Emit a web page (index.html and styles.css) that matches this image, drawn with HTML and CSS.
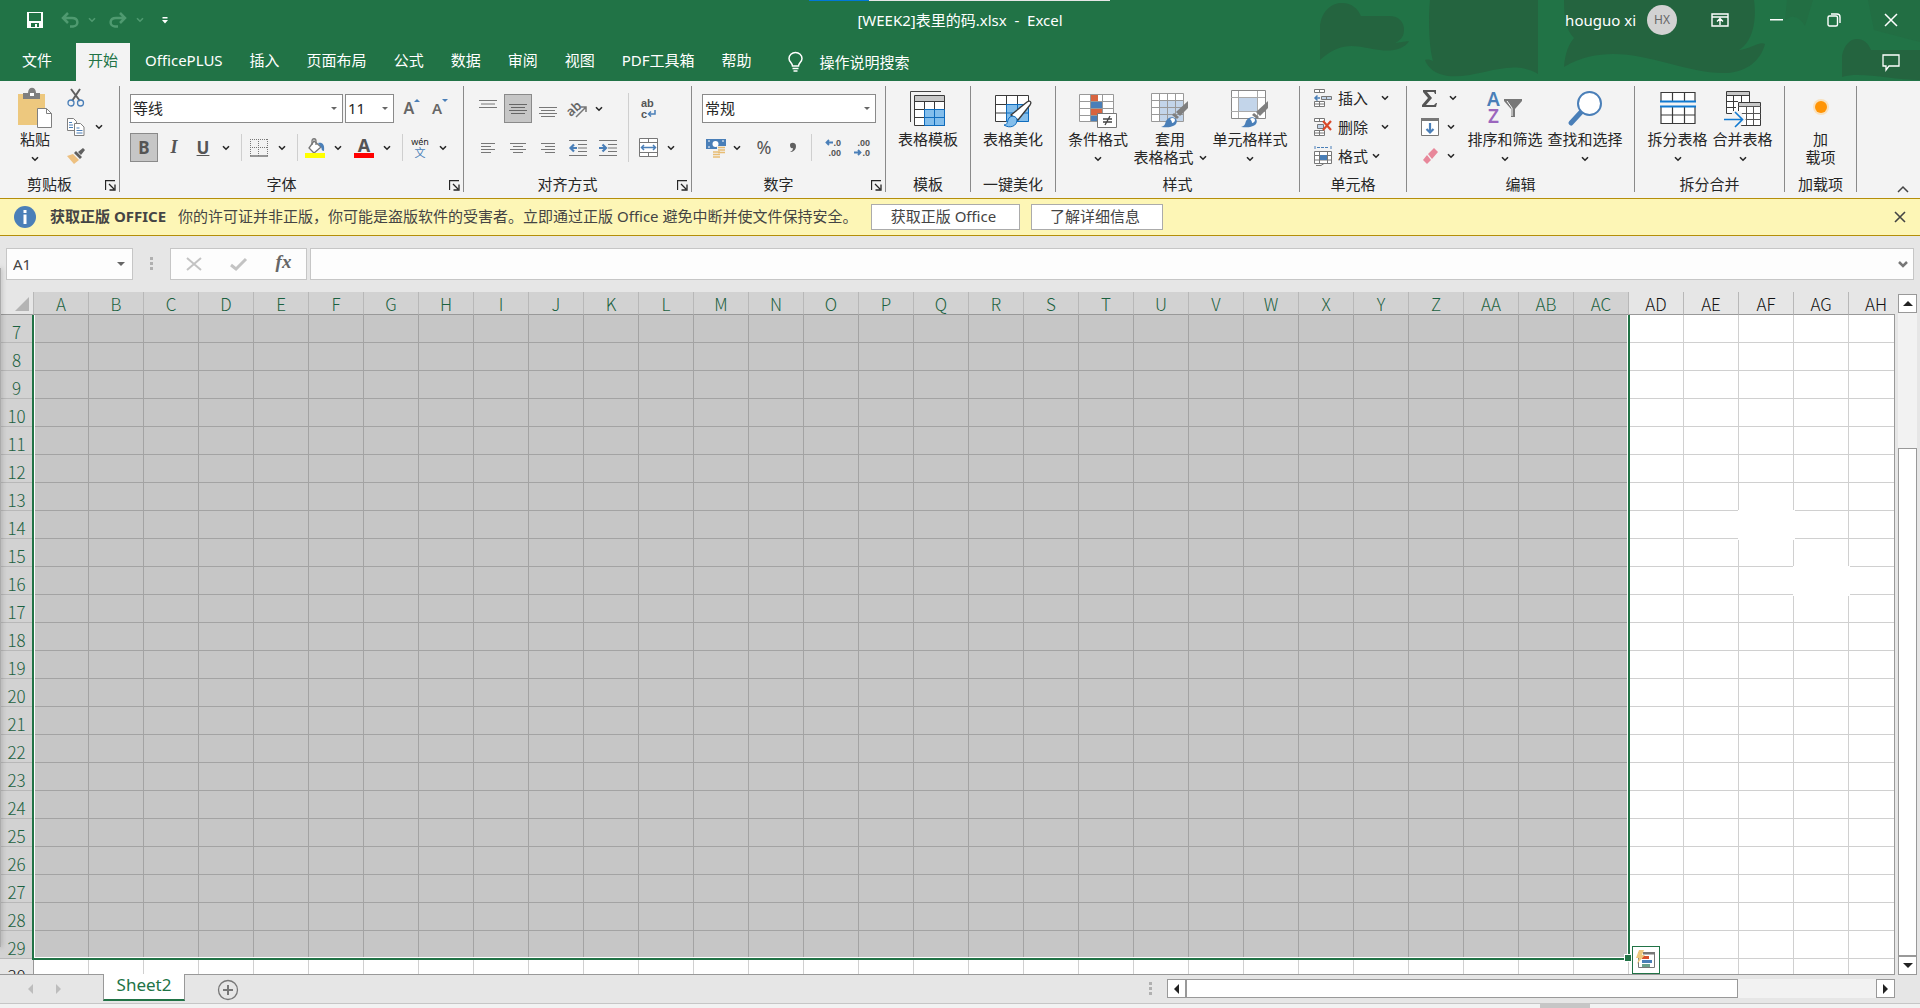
FILE: index.html
```html
<!DOCTYPE html>
<html lang="zh-CN">
<head>
  <meta charset="UTF-8">
  <meta name="viewport" content="width=device-width, initial-scale=1.0">
  <title>[WEEK2]表里的码.xlsx - Excel</title>
  <link rel="stylesheet" href="styles.css">
</head>
<body>
<!-- shared icons -->
<svg class="defs" width="0" height="0">
  <symbol id="chev" viewBox="0 0 8 6"><path d="M1 1.2l3 3 3-3" fill="none" stroke="currentColor" stroke-width="1.6"/></symbol>
  <symbol id="launch" viewBox="0 0 11 11"><path d="M.5 10V.5H10M4 4l5 5M10 4.500V10H4.500" fill="none" stroke="currentColor" stroke-width="1.300"/></symbol>
  <symbol id="brush" viewBox="0 0 28 28"><path d="M27 1v7l-8 8-4-4z" fill="#7f7f7f"/><path d="M13 13l5 4-2 2-5-4z" fill="#7f7f7f"/><path d="M0 27c4-1 4-3 5-6 2-4 7-5 10-2 2 3 0 6-3 7-4 2-8 1-12 1z" fill="#4a7fb8"/><path d="M9 19c2-2 5-1 5 1s-2 3-3 3c0-2-1-3-2-4z" fill="#fff"/></symbol>
</svg>

<header>
  <svg class="art" width="600" height="81" viewBox="1320 0 600 81" fill="#24643f">
    <path d="M1320 60V25C1322 10 1332 3 1342 3c10 0 16 6 19 13h28c10 0 15 6 15 14s-5 11-9 13l14-2c-4 8-18 11-29 9-20-2-36-12-60 10z"/>
    <path d="M1430 0h108v74c-28-17-58 5-90 2-13-2-20-8-23-16 4-1 5 0 8 1-4-15-5-42-3-61z"/>
    <path d="M1564 0h190c3 22-2 42-15 50 12-1 20-9 26-6-4 16-18 28-38 29-52 2-105-39-163-6 1-14 5-23 10-29-8-8-10-20-10-38z"/>
    <path d="M1842 77V56c2-11 8-17 15-17 7 0 11 4 14 11h49v30c-28 0-60-9-78-3z"/>
    <path d="M1787 0h26l-8 26c-6-10-14-12-20-5z" opacity=".35"/><path d="M1868 0h52v42l-46-12z" opacity=".35"/>
  </svg>
  <div class="load-strip"></div>
  <div class="titlebar">
    <div class="quick">
      <button aria-label="保存"><svg width="18" height="18" viewBox="0 0 18 18"><path d="M1 1h16v16H1z" fill="#fff"/><path d="M3 2h12v8H3zM5 12h8v4h-2v-3H9v3H5z" fill="#217346"/></svg></button>
      <button class="dim" aria-label="撤消"><svg width="18" height="16" viewBox="0 0 18 16" fill="none" stroke="currentColor" stroke-width="2.5"><path d="M7 1L2 6l5 5M2 6h9c7 0 7 8 1 8.500H9"/></svg></button>
      <button class="dim" aria-label="撤消列表"><svg class="chev"><use href="#chev"/></svg></button>
      <button class="dim" aria-label="恢复"><svg width="18" height="16" viewBox="0 0 18 16" fill="none" stroke="currentColor" stroke-width="2.5"><path d="M11 1l5 5-5 5M16 6H7c-7 0-7 8-1 8.500h3"/></svg></button>
      <button class="dim" aria-label="恢复列表"><svg class="chev"><use href="#chev"/></svg></button>
      <button aria-label="自定义快速访问工具栏"><svg width="6" height="7" viewBox="0 0 6 7" fill="#fff"><path d="M.5 0h5v1.500h-5zM0 3h6L3 6.500z"/></svg></button>
    </div>
    <h1>[WEEK2]表里的码.xlsx&nbsp; - &nbsp;Excel</h1>
    <div class="window">
      <span class="user">houguo xi</span>
      <span class="avatar">HX</span>
      <button aria-label="功能区显示选项"><svg width="18" height="14" viewBox="0 0 18 14" fill="none" stroke="#fff" stroke-width="1.400"><path d="M1 1h16v12H1zM1 4h16M9 12V6M6 8.500l3-3 3 3"/></svg></button>
      <button aria-label="最小化"><svg width="13" height="2"><path d="M0 0h13v1.500H0z" fill="#fff"/></svg></button>
      <button aria-label="还原"><svg width="14" height="14" viewBox="0 0 14 14" fill="none" stroke="#fff" stroke-width="1.400"><rect x="1" y="3" width="9.500" height="10" rx="1.500"/><path d="M4 1h6c2 0 3 1 3 3v6"/></svg></button>
      <button aria-label="关闭"><svg width="14" height="14" viewBox="0 0 14 14" stroke="#fff" stroke-width="1.500"><path d="M1 1l12 12M13 1L1 13"/></svg></button>
    </div>
  </div>
  <nav>
    <a href="#" class="file">文件</a>
    <a href="#" class="active">开始</a>
    <a href="#">OfficePLUS</a>
    <a href="#">插入</a>
    <a href="#">页面布局</a>
    <a href="#">公式</a>
    <a href="#">数据</a>
    <a href="#">审阅</a>
    <a href="#">视图</a>
    <a href="#">PDF工具箱</a>
    <a href="#">帮助</a>
    <a href="#" class="tell"><svg width="15" height="20" viewBox="0 0 15 20" fill="none" stroke="#fff" stroke-width="1.500"><path d="M4.500 14c0-3-3.500-4-3.500-7.500a6.500 6 0 0 1 13 0c0 3.500-3.500 4.500-3.500 7.500zM4.500 16.500h6M5.500 19h4"/></svg>操作说明搜索</a>
    <button class="comment" aria-label="批注"><svg width="18" height="17" viewBox="0 0 18 17" fill="none" stroke="#fff" stroke-width="1.300"><path d="M1 1h16v11H7l-3 4v-4H1z"/></svg></button>
  </nav>
</header>

<div class="ribbon">
  <section class="group g-clip">
    <div class="tools">
      <button class="big"><svg width="36" height="40" viewBox="0 0 36 40"><path d="M1 6h27v31H1z" fill="#edc87e"/><path d="M6 5h5c0-7 8-7 8 0h4v6H6z" fill="#7f7f7f"/><path d="M13 5h4v3h-4z" fill="#fff"/><path d="M20.500 20.500h9l5 5v14h-14z" fill="#fff" stroke="#7f7f7f"/><path d="M29.500 20.500v5h5" fill="none" stroke="#7f7f7f"/></svg><span>粘贴</span><svg class="chev"><use href="#chev"/></svg></button>
      <div class="stack">
        <button aria-label="剪切"><svg width="18" height="20" viewBox="0 0 18 20" fill="none"><path d="M4 1l9 12M13 1L5 13" stroke="#606060" stroke-width="2"/><circle cx="4" cy="15" r="3" stroke="#4a7fb8" stroke-width="1.300"/><circle cx="13.500" cy="15" r="3" stroke="#4a7fb8" stroke-width="1.300"/></svg></button>
        <div class="split"><button aria-label="复制"><svg width="18" height="18" viewBox="0 0 18 18" fill="#fff" stroke="#7f7f7f"><path d="M.5.5h6l3 3v9h-9z"/><path d="M7.500 5.500h6l3.500 3.500v8.500H7.500z"/><path d="M2 4.500h3M2 7h4M2 9.500h4M9.500 10h3M9.500 12.500h6M9.500 15h6" stroke="#4a7fb8"/></svg></button><button aria-label="复制选项"><svg class="chev"><use href="#chev"/></svg></button></div>
        <button aria-label="格式刷"><svg width="18" height="16" viewBox="0 0 18 16"><path d="M0 8l6-2 6 6-5 4z" fill="#edc080"/><path d="M7 5l2-2 6 6-2 2zM11 4l5-4 2 2-4 5z" fill="#606060"/></svg></button>
      </div>
    </div>
    <footer><span>剪贴板</span><button aria-label="剪贴板设置"><svg width="11" height="11"><use href="#launch"/></svg></button></footer>
  </section>

  <section class="group g-font">
    <div class="tools rows">
      <div class="row">
        <span class="drop wide"><select aria-label="字体"><option>等线</option></select></span>
        <span class="drop size"><select aria-label="字号"><option>11</option></select></span>
        <button class="icon grow" aria-label="增大字号"><span class="letter">A</span><svg width="6" height="3"><path d="M0 3l3-3 3 3z" fill="#4a7fb8"/></svg></button>
        <button class="icon" aria-label="减小字号"><span class="letter small">A</span><svg width="6" height="3"><path d="M0 0l3 3 3-3z" fill="#4a7fb8"/></svg></button>
      </div>
      <div class="row">
        <button class="icon on"><b>B</b></button>
        <button class="icon italic"><i>I</i></button>
        <div class="split"><button><u>U</u></button><button aria-label="下划线选项"><svg class="chev"><use href="#chev"/></svg></button></div>
        <i class="sep"></i>
        <div class="split"><button aria-label="边框"><svg width="18" height="18" viewBox="0 0 18 18" fill="none" stroke="#777"><path d="M0 .5h18M0 8.500h18M.5 0v17M8.500 0v17M17.500 0v17" stroke-dasharray="1 1"/><path d="M0 17h18" stroke-width="1.500"/></svg></button><button aria-label="边框选项"><svg class="chev"><use href="#chev"/></svg></button></div>
        <i class="sep"></i>
        <div class="split"><button aria-label="填充颜色"><svg width="20" height="20" viewBox="0 0 20 20"><path d="M9 3l7 6-7 6-5-5z" fill="#fff" stroke="#777" stroke-width="1.300"/><path d="M7 7V3c0-3 4-3 4 0v4" fill="none" stroke="#777" stroke-width="1.300"/><path d="M13 5c4-1 7 1 6 8-3 0-2-3-3-4z" fill="#4a7fb8"/><path d="M0 15h20v5H0z" fill="#ff0"/></svg></button><button aria-label="填充选项"><svg class="chev"><use href="#chev"/></svg></button></div>
        <div class="split next"><button aria-label="字体颜色" class="color"><b>A</b><span class="bar"></span></button><button aria-label="颜色选项"><svg class="chev"><use href="#chev"/></svg></button></div>
        <i class="sep"></i>
        <div class="split"><button class="wen"><small>wén</small><span>文</span></button><button aria-label="拼音选项"><svg class="chev"><use href="#chev"/></svg></button></div>
      </div>
    </div>
    <footer><span>字体</span><button aria-label="字体设置"><svg width="11" height="11"><use href="#launch"/></svg></button></footer>
  </section>

  <section class="group g-align">
    <div class="tools">
      <div class="rows">
        <div class="row gap">
          <button class="icon" aria-label="顶端对齐"><svg width="18" height="18" viewBox="0 0 18 18" stroke="#777"><path d="M0 .5h18M2 4h14M0 7.500h18"/></svg></button>
          <button class="icon on" aria-label="垂直居中"><svg width="18" height="12" viewBox="0 0 18 12" stroke="#666"><path d="M0 1.500h18M2 4.500h14M0 7.500h18M2 10.500h14"/></svg></button>
          <button class="icon" aria-label="底端对齐"><svg width="18" height="20" viewBox="0 0 18 20" stroke="#777"><path d="M0 8.500h18M2 11.500h14M0 14.500h18M2 17.500h14"/></svg></button>
          <div class="split tight"><button aria-label="方向"><svg width="20" height="18" viewBox="0 0 20 18"><text x="-2" y="13" transform="rotate(-42 6 9)" fill="#666" font-size="13" font-weight="600">ab</text><path d="M8 17L18 7M13 7h5v5" fill="none" stroke="#777" stroke-width="1.500"/></svg></button><button aria-label="方向选项"><svg class="chev"><use href="#chev"/></svg></button></div>
        </div>
        <div class="row gap">
          <button class="icon" aria-label="左对齐"><svg width="14" height="12" viewBox="0 0 14 12" stroke="#777"><path d="M0 1.500h14M0 4.500h10M0 7.500h14M0 10.500h10"/></svg></button>
          <button class="icon" aria-label="居中"><svg width="16" height="12" viewBox="0 0 16 12" stroke="#777"><path d="M0 1.500h16M3 4.500h10M0 7.500h16M3 10.500h10"/></svg></button>
          <button class="icon" aria-label="右对齐"><svg width="14" height="12" viewBox="0 0 14 12" stroke="#777"><path d="M0 1.500h14M4 4.500h10M0 7.500h14M4 10.500h10"/></svg></button>
          <button class="icon" aria-label="减少缩进"><svg width="18" height="16" viewBox="0 0 18 16" fill="none" stroke="#777"><path d="M0 .5h18M9 4.500h9M9 8h9M9 11.500h9M0 15.500h18"/><path d="M8 8H2M5 4.500L1.500 8 5 11.500" stroke="#4a7fb8" stroke-width="2.200"/></svg></button>
          <button class="icon" aria-label="增加缩进"><svg width="18" height="16" viewBox="0 0 18 16" fill="none" stroke="#777"><path d="M0 .5h18M9 4.500h9M9 8h9M9 11.500h9M0 15.500h18"/><path d="M0 8h6M3.500 4.500L7 8l-3.500 3.500" stroke="#4a7fb8" stroke-width="2.200"/></svg></button>
        </div>
      </div>
      <i class="sep tall"></i>
      <div class="rows">
        <div class="row"><button class="icon wrap" aria-label="自动换行"><span>ab</span><span>c<svg width="9" height="8" viewBox="0 0 9 8" fill="none" stroke="#4a7fb8" stroke-width="1.500"><path d="M8 0v4H2M4 1.500L1.500 4 4 6.500"/></svg></span></button></div>
        <div class="row"><div class="split"><button aria-label="合并后居中"><svg width="19" height="19" viewBox="0 0 19 19" fill="#fff" stroke="#777"><path d="M.5.5h18v18H.5zM.5 4.500h18M.5 14.500h18M9.500 0v4.500M9.500 14.500V19"/><path d="M2.500 9.500h14M5 7L2.500 9.500 5 12M14 7l2.500 2.500L14 12" fill="none" stroke="#4a7fb8" stroke-width="1.500"/></svg></button><button aria-label="合并选项"><svg class="chev"><use href="#chev"/></svg></button></div></div>
      </div>
    </div>
    <footer><span>对齐方式</span><button aria-label="对齐设置"><svg width="11" height="11"><use href="#launch"/></svg></button></footer>
  </section>

  <section class="group g-number">
    <div class="tools rows">
      <div class="row"><span class="drop number"><select aria-label="数字格式"><option>常规</option></select></span></div>
      <div class="row num">
        <div class="split tight"><button aria-label="会计数字格式"><svg width="20" height="20" viewBox="0 0 20 20"><path d="M0 1h20v10H0z" fill="#4a7fb8"/><circle cx="9.500" cy="6" r="3" fill="#fff"/><path d="M2 3h2M2 9h2M16 3h2" stroke="#fff"/><path d="M11 8h9v9h-5v3H7v-8h4z" fill="#f3f3f3"/><path d="M12 9.500h7M12 12h7M12 14.500h7M7 14h7M7 16.500h7M7 19h7" stroke="#e8bd74" stroke-width="1.600"/></svg></button><button aria-label="货币选项"><svg class="chev"><use href="#chev"/></svg></button></div>
        <button class="icon pct">%</button>
        <button class="icon" aria-label="千位分隔样式"><svg width="8" height="12" viewBox="0 0 8 12"><path d="M1 3c0-3 6-3 6 1S4 10 1 10c2-1 3-2 3-4-2 1-3-1-3-3z" fill="#606060"/></svg></button>
        <i class="sep"></i>
        <button class="icon dec"><span><svg width="8" height="7" viewBox="0 0 8 7" fill="none" stroke="#4a7fb8" stroke-width="1.800"><path d="M8 3.500H2M4 1L1.500 3.500 4 6"/></svg>.0</span><span>.00</span></button>
        <button class="icon dec"><span>.00</span><span><svg width="8" height="7" viewBox="0 0 8 7" fill="none" stroke="#4a7fb8" stroke-width="1.800"><path d="M0 3.500h6M4 1l2.500 2.500L4 6"/></svg>.0</span></button>
      </div>
    </div>
    <footer><span>数字</span><button aria-label="数字设置"><svg width="11" height="11"><use href="#launch"/></svg></button></footer>
  </section>

  <section class="group g-one">
    <div class="tools center">
      <button class="big"><svg width="38" height="40" viewBox="0 0 38 40" fill="none"><path d="M1.500 34V3.500H32" stroke="#444"/><path d="M5.500 7.500h30v30h-30z" fill="#fff"/><path d="M6 8h29v5H6z" fill="#c8c8c8"/><path d="M15 21h20v16H15z" fill="#83beec"/><path d="M5.500 13.500h30M5.500 21.500h10M5.500 29.500h10M15.500 14v7M25.500 14v7M5.500 7.500h30v30h-30z" stroke="#3a3a3a"/><path d="M15.500 21.500h20v16h-20zM25.500 21.500v16M15.500 29.500h20" stroke="#0f6cbd"/></svg><span>表格模板</span></button>
    </div>
    <footer><span>模板</span></footer>
  </section>

  <section class="group g-one">
    <div class="tools center">
      <button class="big"><svg width="40" height="40" viewBox="0 0 40 40" fill="none"><path d="M2.500 7.500h33v26h-33z" fill="#fff" stroke="#3a3a3a"/><path d="M13 16h23v18H13z" fill="#83beec"/><path d="M2.500 16.500h11M2.500 25h11M13.500 7.500v26M24.500 7.500v9" stroke="#3a3a3a"/><path d="M13.500 16.500h22v17h-22zM24.500 16v18M13 25h23" stroke="#0f6cbd"/><path d="M18 27L34 14c3-2 5 0 3 3L25 32z" fill="#fff" stroke="#3a3a3a" stroke-width="1.300"/><path d="M11 37c4 0 3-4 5-7 2-3 8-2 8 2 0 6-7 9-13 5z" fill="#83beec" stroke="#0f6cbd"/></svg><span>表格美化</span></button>
    </div>
    <footer><span>一键美化</span></footer>
  </section>

  <section class="group g-style">
    <div class="tools">
      <button class="big w64"><svg width="38" height="40" viewBox="0 0 38 40" fill="none"><path d="M.5 6.500h34v27H.5z" fill="#fff"/><path d="M12 7h7v6h-7zM12 21h11v6H12z" fill="#d8643f"/><path d="M12 14h11v6H12zM12 28h6v6h-6z" fill="#4a7fb8"/><path d="M.5 6.500h34v27H.5zM11.500 7v26M23.500 7v26M0 13.500h35M0 20.500h35M0 27.500h35" stroke="#999"/><path d="M18.500 25.500h19v14h-19z" fill="#fff" stroke="#777"/><path d="M24 31h9M24 34h9M31 28l-5 9" stroke="#444" stroke-width="1.300"/></svg><span>条件格式</span><svg class="chev"><use href="#chev"/></svg></button>
      <button class="big w80"><svg width="38" height="40" viewBox="0 0 38 40" fill="none"><path d="M.5 5.500h32v28H.5z" fill="#fff"/><path d="M9 13h24v20H9z" fill="#c3d5ea"/><path d="M.5 5.500h32v28H.5zM8.500 6v28M16.500 6v28M24.500 6v28M0 12.500h33M0 19.500h33M0 26.500h33" stroke="#999"/><use href="#brush" x="10" y="12" width="28" height="28"/></svg><span>套用</span><span class="line">表格格式<svg class="chev"><use href="#chev"/></svg></span></button>
      <button class="big w80"><svg width="38" height="40" viewBox="0 0 38 40" fill="none"><path d="M.5 2.500h34v28H.5z" fill="#fff" stroke="#888"/><path d="M8 10h18v13H8z" fill="#c3d5ea"/><path d="M7.500 3v27M26.500 3v27M0 9.500h34M0 23.500h34" stroke="#aaa"/><use href="#brush" x="10" y="12" width="28" height="28"/></svg><span>单元格样式</span><svg class="chev"><use href="#chev"/></svg></button>
    </div>
    <footer><span>样式</span></footer>
  </section>

  <section class="group g-cells">
    <div class="tools">
      <div class="stack text">
        <button><svg width="18" height="20" viewBox="0 0 18 20" fill="#fff" stroke="#777"><path d="M.5 1.500h10v3H.5zM5.500 1v4M.5 13.500h10v5H.5zM5.500 13v6M.5 16h10"/><path d="M7.500 8.500h10v3h-10zM12.500 8v4" fill="#c3d5ea"/><path d="M6 10H1M3.500 7.500L1 10l2.500 2.500" fill="none" stroke="#4a7fb8" stroke-width="1.500"/></svg><span>插入</span><svg class="chev"><use href="#chev"/></svg></button>
        <button><svg width="18" height="20" viewBox="0 0 18 20" fill="#fff" stroke="#777"><path d="M.5 1.500h10v3H.5zM5.500 1v4M.5 13.500h10v5H.5zM5.500 13v6M.5 16h10"/><path d="M3.500 7.500h6v4h-6z" fill="#c3d5ea"/><path d="M9 4l8 9M17 4l-8 9" stroke="#d9492a" stroke-width="2.200"/></svg><span>删除</span><svg class="chev"><use href="#chev"/></svg></button>
        <button class="near"><svg width="18" height="20" viewBox="0 0 18 20" fill="#fff" stroke="#777"><path d="M.5 5.500h17v12H.5zM5.500 5v13M13.500 5v13M0 9.500h18M0 14h18"/><path d="M6 9h7v5H6z" fill="#4a7fb8" stroke="none"/><path d="M1 0v3M17 0v3M3 1.500h12" stroke="#4a7fb8" stroke-dasharray="3 1"/><path d="M2 19.500h5l3-2" fill="none"/></svg><span>格式</span><svg class="chev"><use href="#chev"/></svg></button>
      </div>
    </div>
    <footer><span>单元格</span></footer>
  </section>

  <section class="group g-edit">
    <div class="tools">
      <div class="stack">
        <div class="split"><button aria-label="自动求和"><svg width="16" height="17" viewBox="0 0 16 17"><path d="M1 0h13v4h-1l-1-2H5l5 6-6 7h8l2-2h1l-1 4H0v-2l6-7-5-6z" fill="#555"/></svg></button><button aria-label="求和选项"><svg class="chev"><use href="#chev"/></svg></button></div>
        <div class="split near"><button aria-label="填充"><svg width="18" height="18" viewBox="0 0 18 18" fill="none"><path d="M.5.5h17v17H.5z" fill="#fff" stroke="#777"/><path d="M0 1.500h18" stroke="#777" stroke-width="3"/><path d="M9 5v9M5.500 11L9 14.500l3.500-3.500" stroke="#4a7fb8" stroke-width="2.200"/></svg></button><button aria-label="填充选项"><svg class="chev"><use href="#chev"/></svg></button></div>
        <div class="split near"><button aria-label="清除"><svg width="18" height="17" viewBox="0 0 18 17" fill="#e8879a"><path d="M7 6l6-6 4 4-6 7zM6 7l4 5-4 4-4-4z"/></svg></button><button aria-label="清除选项"><svg class="chev"><use href="#chev"/></svg></button></div>
      </div>
      <button class="big w80"><svg width="36" height="40" viewBox="0 0 36 40"><text x="0" y="18" font-size="19" font-weight="600" fill="#4a7fb8">A</text><text x="1" y="35" font-size="19" font-weight="600" fill="#9b66bd">Z</text><path d="M17 11h18v2l-7 8v8h-4v-8l-7-8z" fill="#777"/><path d="M20 13l5 7v8" fill="none" stroke="#fff"/></svg><span>排序和筛选</span><svg class="chev"><use href="#chev"/></svg></button>
      <button class="big w80"><svg width="36" height="40" viewBox="0 0 36 40"><path d="M4 35l12-13" stroke="#4a7fb8" stroke-width="5" stroke-linecap="round"/><circle cx="22.500" cy="15.500" r="11.500" fill="#fff" stroke="#4a7fb8" stroke-width="2"/></svg><span>查找和选择</span><svg class="chev"><use href="#chev"/></svg></button>
    </div>
    <footer><span>编辑</span></footer>
  </section>

  <section class="group g-merge">
    <div class="tools">
      <button class="big w65"><svg width="36" height="40" viewBox="0 0 36 40" fill="none"><path d="M1 4.500h34v9H1zM1 18.500h34v17H1z" fill="#fff" stroke="#3a3a3a" stroke-width="1.200"/><path d="M12.500 4v10M24.500 4v10M12.500 18v18M24.500 18v18M1 27h34" stroke="#3a3a3a" stroke-width="1.200"/><path d="M0 13.500h36M0 18.500h36" stroke="#1079d0" stroke-width="2"/></svg><span>拆分表格</span><svg class="chev"><use href="#chev"/></svg></button>
      <button class="big w65"><svg width="38" height="40" viewBox="0 0 38 40" fill="none"><path d="M2.500 3.500h23v22h-23z" fill="#fff"/><path d="M3 4h23v3H3z" fill="#c8c8c8"/><path d="M25.500 14V3.500h-23v22H13M2 7.500h24M2 13.500h12M2 19.500h10M9.500 8v17M17.500 8v6" stroke="#3a3a3a"/><path d="M14.500 14.500h22v23h-22z" fill="#fff" stroke="#3a3a3a"/><path d="M15 15h21v3H15z" fill="#c8c8c8"/><path d="M14 18.500h23M14 25.500h23M14 31.500h23M22.500 19v18M29.500 19v18" stroke="#555"/><path d="M8 23h8l6 8-6 8H8z" fill="#f3f3f3"/><path d="M0 31.500h18M11 24l7.500 7.500L11 39" stroke="#1079d0" stroke-width="1.600"/></svg><span>合并表格</span><svg class="chev"><use href="#chev"/></svg></button>
    </div>
    <footer><span>拆分合并</span></footer>
  </section>

  <section class="group g-addin">
    <div class="tools center">
      <button class="big"><svg width="36" height="40" viewBox="0 0 36 40"><circle cx="18" cy="19" r="8" fill="#ffcf87" opacity=".5"/><circle cx="18" cy="19" r="6" fill="#ff9405"/></svg><span>加</span><span class="line">载项</span></button>
    </div>
    <footer><span>加载项</span></footer>
  </section>
  <button class="collapse" aria-label="折叠功能区"><svg width="12" height="7" viewBox="0 0 12 7" fill="none" stroke="#444" stroke-width="1.500"><path d="M1 6l5-5 5 5"/></svg></button>
</div>

<div class="notice">
  <svg width="22" height="22" viewBox="0 0 22 22"><circle cx="11" cy="11" r="11" fill="#4a7fb8"/><path d="M9.500 4h3v3h-3zM9.500 8.500h3V18h-3z" fill="#fff"/></svg>
  <strong>获取正版 OFFICE</strong>
  <p>你的许可证并非正版，你可能是盗版软件的受害者。立即通过正版 Office 避免中断并使文件保持安全。</p>
  <button class="get">获取正版 Office</button>
  <button class="more">了解详细信息</button>
  <button class="close" aria-label="关闭消息"><svg width="12" height="12" viewBox="0 0 12 12" stroke="#444" stroke-width="1.600"><path d="M1 1l10 10M11 1L1 11"/></svg></button>
</div>

<div class="formula">
  <div class="namebox"><input type="text" value="A1" aria-label="名称框"></div>
  <i class="dots"></i>
  <div class="fx">
    <button aria-label="取消"><svg width="16" height="14" viewBox="0 0 16 14" stroke="#c3c3c3" stroke-width="2"><path d="M1 1l14 12M15 1L1 13"/></svg></button>
    <button aria-label="输入"><svg width="17" height="13" viewBox="0 0 17 13" fill="none" stroke="#c3c3c3" stroke-width="3"><path d="M1 7l5 4L16 1"/></svg></button>
    <button class="fn">fx</button>
  </div>
  <div class="entry"><input type="text" aria-label="编辑栏"><svg width="10" height="7" viewBox="0 0 10 7" fill="none" stroke="#777" stroke-width="2.500"><path d="M1 1l4 4 4-4"/></svg></div>
</div>

<main>
  <div class="edge"></div>
  <div class="grid">
    <table id="cells"></table>
    <div class="selection">
      <i class="handle"></i>
      <button class="quick-tag" aria-label="快速分析"><svg width="20" height="20" viewBox="0 0 20 20"><path d="M2.500 2.500h16v15h-16z" fill="#fff" stroke="#777"/><path d="M7 2h12v2.500H7z" fill="#777"/><path d="M6 6h7v3H6z" fill="#d8502c"/><path d="M6 10h10v3H6z" fill="#4a7fb8"/><path d="M6 14h8v3H6z" fill="#6aa08c"/><path d="M3 0h5L6 5h3l-8 9 2-6H0z" fill="#edc87e"/></svg></button>
    </div>
  </div>
  <div class="vscroll">
    <button aria-label="向上"><svg width="10" height="5"><path d="M0 5l5-5 5 5z" fill="#222"/></svg></button>
    <div class="track"><div class="thumb"></div></div>
    <button aria-label="向下"><svg width="10" height="5"><path d="M0 0l5 5 5-5z" fill="#222"/></svg></button>
  </div>
</main>

<div class="sheets">
  <button class="arrow" aria-label="上一张"><svg width="5" height="10"><path d="M5 0L0 5l5 5z" fill="#bdbdbd"/></svg></button>
  <button class="arrow" aria-label="下一张"><svg width="5" height="10"><path d="M0 0l5 5-5 5z" fill="#bdbdbd"/></svg></button>
  <button class="sheet">Sheet2</button>
  <button class="add" aria-label="新工作表"><svg width="22" height="22" viewBox="0 0 22 22" fill="none" stroke="#777"><circle cx="11" cy="11" r="9.500" stroke-width="1.300"/><path d="M11 6v10M6 11h10" stroke-width="2"/></svg></button>
  <i class="dots"></i>
  <div class="hscroll">
    <button aria-label="向左"><svg width="5" height="10"><path d="M5 0L0 5l5 5z" fill="#222"/></svg></button>
    <div class="track"><div class="thumb"></div></div>
    <button aria-label="向右"><svg width="5" height="10"><path d="M0 0l5 5-5 5z" fill="#222"/></svg></button>
  </div>
</div>
<div class="status"><div class="view"></div></div>

<script src="script.js"></script>
</body>
</html>
```
FILE: styles.css
```css
* {
  margin: 0;
  padding: 0;
  box-sizing: border-box;
}

body {
  height: 100vh;
  display: flex;
  flex-direction: column;
  overflow: hidden;
  font-family: "Noto Sans", "Noto Sans CJK SC", sans-serif;
  font-size: 15px;
  line-height: 19px;
  color: #262626;
  background: #e6e6e6;
}

button, input, select {
  font: inherit;
  color: inherit;
  background: none;
  border: none;
  border-radius: 0;
  outline: none;
}

button {
  display: flex;
  align-items: center;
  justify-content: center;
  white-space: nowrap;
}

svg {
  display: block;
  flex: none;
  overflow: visible;
}

.defs {
  position: absolute;
}

.chev {
  width: 8px;
  height: 6px;
}

/* title bar */
header {
  flex: none;
  position: relative;
  color: #fff;
  background: #217346;
}

.art {
  position: absolute;
  top: 0;
  right: 0;
  overflow: hidden;
}

.load-strip {
  position: absolute;
  top: 0;
  left: 42%;
  width: 301px;
  height: 1px;
  margin-left: 3px;
  background: linear-gradient(to right, #0078d7 60px, #e6e6e6 60px);
}

.titlebar {
  position: relative;
  display: grid;
  grid-template-columns: 1fr auto 1fr;
  align-items: center;
  height: 43px;
  padding-bottom: 3px;
}

.titlebar h1 {
  font-size: 15px;
  font-weight: 400;
}

.quick {
  display: flex;
  padding-left: 22px;
}

.quick button {
  width: 26px;
  height: 26px;
}

.quick .dim {
  width: 22px;
  color: #4f9a70;
}

.quick button:nth-child(2) {
  margin-left: 11px;
}

.quick button:nth-child(4) {
  margin-left: 4px;
}

.quick button:last-child {
  margin-left: 1px;
}

.window {
  display: flex;
  align-items: center;
  justify-content: flex-end;
  padding-right: 1px;
}

.window button {
  width: 57px;
  height: 36px;
}

.avatar {
  width: 30px;
  height: 30px;
  margin: 0 14px 0 11px;
  border-radius: 50%;
  background: #d2d2d2;
  color: #666;
  font-size: 12px;
  line-height: 30px;
  text-align: center;
}

nav {
  position: relative;
  display: flex;
  gap: 3px;
  height: 38px;
}

nav a {
  padding: 0 12px;
  line-height: 34px;
  color: #fff;
  text-decoration: none;
}

nav a.file {
  padding: 0 21px 0 22px;
}

nav a.active {
  color: #217346;
  background: #f3f3f3;
}

nav a.tell {
  display: flex;
  align-items: center;
  gap: 17px;
  padding: 0 21px;
}

.comment {
  width: 58px;
  margin-left: auto;
}

/* ribbon */
.ribbon {
  flex: none;
  display: flex;
  height: 117px;
  padding: 5px 0 6px;
  background: #f3f3f3;
}

.group {
  display: flex;
  flex-direction: column;
  justify-content: space-between;
  border-right: 1px solid #8a8a8a;
}

.g-clip { width: 120px; }
.g-font { width: 344px; }
.g-align { width: 228px; }
.g-number { width: 194px; }
.g-one { width: 85px; }
.g-style { width: 244px; }
.g-cells { width: 107px; }
.g-edit { width: 228px; }
.g-merge { width: 150px; }
.g-addin { width: 72px; }

.group footer {
  display: flex;
  height: 15px;
  line-height: 15px;
}

.group footer span {
  flex: 1;
  text-align: center;
}

.group footer button {
  width: 20px;
  align-items: flex-start;
  padding: 3px 0 0 2px;
}

.tools {
  display: flex;
  height: 84px;
  padding-left: 10px;
}

.g-clip .tools {
  padding-left: 7px;
}

.tools.center {
  padding: 0;
  justify-content: center;
}

.rows {
  display: flex;
  flex-direction: column;
  gap: 10px;
  padding-top: 8px;
}

.row {
  display: flex;
  height: 29px;
}

.row.gap {
  gap: 2px;
}

.row.num {
  gap: 1px;
}

.row.num .split {
  margin-right: 5px;
}

.row.num .sep {
  margin-left: 3px;
}

.stack {
  display: flex;
  flex-direction: column;
  gap: 5px;
}

.stack button {
  height: 24px;
}

.g-clip .stack {
  align-items: flex-start;
  width: 48px;
}

.g-clip .stack > button {
  width: 26px;
}

.g-edit .stack {
  width: 48px;
}

.split.near button:last-child {
  width: 16px;
}

.stack.text {
  padding-left: 4px;
}

.stack.text button {
  justify-content: flex-start;
}

.stack.text span {
  margin: 0 13px 0 6px;
}

.stack.text .near span {
  margin-right: 4px;
}

.big {
  flex-direction: column;
  justify-content: flex-start;
  align-self: flex-start;
  padding-top: 2px;
}

.g-clip .big {
  width: 56px;
}

.w64 { width: 64px; }
.w65 { width: 65px; }
.w80 { width: 80px; }

.big span {
  height: 19px;
  margin-top: 1px;
  line-height: 21px;
}

.big > .chev {
  margin-top: 8px;
}

.big .line {
  display: flex;
  align-items: center;
  gap: 5px;
  margin: 0;
}

.icon {
  width: 28px;
  height: 29px;
  color: #555;
}

.icon.italic {
  width: 32px;
  font: italic 700 18px "Liberation Serif", serif;
}

.icon.on {
  border: 1px solid #8a8a8a;
  background: #c6c6c6;
}

.icon b, .split u {
  font-size: 17px;
  font-weight: 700;
  color: #555;
}

.split {
  display: flex;
}

.split button:first-child {
  width: 26px;
}

.split button:last-child {
  width: 20px;
}

.split.tight button:first-child {
  width: 28px;
}

.split.tight button:last-child {
  width: 14px;
}

.split.next {
  margin-left: 3px;
}

.sep {
  width: 1px;
  height: 27px;
  margin: 1px 4px 0 5px;
  background: #cfcfcf;
}

.sep.tall {
  height: 69px;
  margin: 7px 6px 0 6px;
}

.icon.grow {
  margin-left: 4px;
}

.letter {
  font-size: 16px;
  font-weight: 600;
  color: #666;
}

.letter.small {
  font-size: 15px;
}

.letter + svg {
  align-self: flex-start;
  margin-top: 5px;
}

.color {
  flex-direction: column;
}

.color b {
  height: 15px;
  font-size: 18px;
  line-height: 15px;
  color: #555;
}

.color .bar {
  width: 20px;
  height: 5px;
  background: #f00;
}

.wen {
  flex-direction: column;
}

.wen small {
  font-size: 9px;
  line-height: 9px;
}

.wen span {
  font-size: 11px;
  line-height: 13px;
  color: #4a7fb8;
}

.wrap, .dec {
  flex-direction: column;
  align-items: flex-start;
  padding-left: 6px;
  font: 700 11px/11px "Liberation Sans", sans-serif;
}

.wrap span, .dec span {
  display: flex;
  align-items: center;
}

.dec {
  align-items: flex-end;
  padding: 0 4px 0 0;
  font-size: 9px;
  line-height: 10px;
}

.pct {
  font-size: 18px;
}

.drop {
  position: relative;
  height: 29px;
  border: 1px solid #8a8a8a;
  background: #fff;
}

.drop::after, .namebox::after {
  content: "";
  position: absolute;
  right: 5px;
  top: 12px;
  border: 3px solid transparent;
  border-top-color: #666;
  border-bottom: 0;
}

.drop select {
  width: 100%;
  height: 27px;
  padding-left: 2px;
  appearance: none;
}

.drop.wide {
  width: 213px;
  margin-right: 2px;
}

.drop.size {
  width: 49px;
}

.drop.number {
  width: 174px;
}

.collapse {
  width: 35px;
  margin: 96px 0 0 auto;
  height: 14px;
}

/* licence notice */
.notice {
  flex: none;
  display: flex;
  align-items: center;
  height: 38px;
  padding-left: 14px;
  border-top: 1px solid #b48e0a;
  border-bottom: 1px solid #b48e0a;
  background: #fdf6b6;
  color: #444;
}

.notice strong, .notice p {
  padding-bottom: 2px;
}

.notice strong {
  margin: 0 12px 0 14px;
}

.notice button {
  height: 26px;
}

.notice .get, .notice .more {
  padding: 0 5px 2px 0;
  border: 1px solid #ababab;
  background: #fff;
}

.notice .get {
  width: 149px;
  margin: 0 11px 0 14px;
}

.notice .more {
  width: 132px;
}

.notice .close {
  width: 40px;
  margin-left: auto;
}

/* formula bar */
.formula {
  flex: none;
  display: flex;
  height: 56px;
  padding: 12px 6px;
}

.namebox, .fx, .entry {
  position: relative;
  display: flex;
  align-items: center;
  height: 32px;
  border: 1px solid #c6c6c6;
  background: #fdfdfd;
}

.namebox {
  width: 127px;
}

.namebox::after {
  right: 7px;
  top: 13px;
  border-width: 4px;
  border-bottom: 0;
}

.namebox input {
  width: 100px;
  padding-left: 6px;
  color: #444;
}

.dots {
  width: 3px;
  height: 13px;
  margin: 9px 17px 0 17px;
  background: repeating-linear-gradient(#b0b0b0 0 3px, transparent 3px 5px);
}

.fx {
  width: 137px;
}

.fx button {
  width: 45px;
  height: 30px;
}

.fx .fn {
  padding-bottom: 4px;
  font: italic 700 19px "Liberation Serif", serif;
  color: #666;
}

.entry {
  flex: 1;
  margin-left: 3px;
}

.entry input {
  flex: 1;
  height: 30px;
}

.entry svg {
  margin-right: 5px;
}

/* worksheet */
main {
  flex: 1;
  display: flex;
  min-height: 0;
  position: relative;
}

.edge {
  position: absolute;
  z-index: 2;
  top: -24px;
  bottom: 28px;
  left: 0;
  width: 1px;
  background: #ababab;
  box-shadow: 0 0 5px rgba(0, 0, 0, 0.6);
}

.grid {
  flex: 1;
  position: relative;
  overflow: hidden;
  border-bottom: 1px solid #999;
}

.grid::after {
  content: "";
  position: absolute;
  top: 22px;
  right: 0;
  bottom: 0;
  width: 1px;
  background: #999;
}

table {
  border-spacing: 0;
  table-layout: fixed;
  width: 1904px;
}

th {
  height: 28px;
  font-family: "Noto Sans CJK SC", sans-serif;
  font-size: 17px;
  font-weight: 300;
  color: #111;
  background: #e6e6e6;
}

thead th {
  width: 55px;
  height: 23px;
  padding-top: 2px;
  line-height: 20px;
  border-right: 1px solid #b8b8b8;
  border-bottom: 1px solid #999;
}

thead th:first-child {
  width: 34px;
}

tbody th {
  vertical-align: bottom;
  line-height: 21px;
  border-right: 1px solid #999;
  border-bottom: 1px solid #b8b8b8;
}

th.in {
  color: #1b6140;
  background: #d2d2d2;
}

.corner i {
  display: block;
  margin: 2px 0 3px 15px;
  border: 7px solid #b4b4b4;
  border-top-color: transparent;
  border-left-color: transparent;
  width: 0;
}

td {
  height: 28px;
  border-right: 1px solid #d0d0d0;
  border-bottom: 1px solid #d0d0d0;
  background: #fff;
}

td.in {
  border-color: #a3a3a3;
  background: #c6c6c6;
}

td.plain {
  border-color: #fff;
  outline: 1px solid #fff;
}

/* 29 columns by 23 rows */
.selection {
  position: absolute;
  top: 23px;
  left: 32px;
  width: calc(29 * 55px + 3px);
  height: calc(23 * 28px + 1px);
  border: 2px solid #217346;
  border-top: none;
  box-shadow: inset 1px -1px #fff, inset -1px 0 #fff;
}

.handle {
  position: absolute;
  right: -3px;
  bottom: -3px;
  width: 6px;
  height: 6px;
  background: #217346;
  box-shadow: 0 0 0 1px #fff;
}

.quick-tag {
  position: absolute;
  left: calc(100% + 4px);
  bottom: -16px;
  width: 28px;
  height: 28px;
  border: 1px solid #217346;
  background: #fff;
}

/* scroll bars */
.vscroll {
  display: flex;
  flex-direction: column;
  width: 25px;
  padding: 2px 3px 0 3px;
}

.vscroll button, .hscroll button {
  flex: none;
  width: 19px;
  height: 19px;
  border: 1px solid #999;
  background: #fff;
}

.track {
  flex: 1;
  display: flex;
  background: #f2f2f2;
}

.thumb {
  border: 1px solid #999;
  background: #fff;
}

.vscroll .track {
  align-items: flex-end;
  width: 19px;
}

.vscroll .thumb {
  width: 19px;
  height: 79%;
}

.sheets {
  flex: none;
  display: flex;
  height: 28px;
  padding-right: 25px;
}

.arrow {
  width: 28px;
  height: 28px;
}

.arrow:first-child {
  margin-left: 16px;
}

.sheet {
  position: relative;
  z-index: 1;
  width: 82px;
  height: 27px;
  margin: -1px 32px 0 31px;
  padding-bottom: 4px;
  border: 1px solid #999;
  border-top: none;
  border-bottom: 2px solid #217346;
  background: #fff;
  color: #217346;
  font-size: 17px;
}

.add {
  height: 29px;
}

.sheets .dots {
  margin: 7px 15px 0 auto;
}

.hscroll {
  display: flex;
  flex: 0 1 728px;
  height: 19px;
  margin-top: 4px;
}

.hscroll .thumb {
  width: 80%;
}

.status {
  flex: none;
  height: 5px;
  border-top: 1px solid #c6c6c6;
  background: #f2f2f2;
}

.view {
  width: 50px;
  height: 4px;
  margin: 0 330px 0 auto;
  background: #c6c6c6;
}
```
FILE: script.js
```javascript
const COLS = 34;      // A to AH
const FIRST_ROW = 7;
const LAST_ROW = 30;
const SEL_COLS = 29;  // selection ends at AC29
const SEL_ROW = 29;
const plain = ['AF14', 'AG16'];

function colName(n) {
  const letter = String.fromCharCode(65 + n % 26);
  return n < 26 ? letter : 'A' + letter;
}

let html = '<thead><tr><th class="corner"><i></i></th>';
for (let c = 0; c < COLS; c++) {
  html += `<th class="${c < SEL_COLS ? 'in' : ''}">${colName(c)}</th>`;
}
html += '</tr></thead><tbody>';

for (let r = FIRST_ROW; r <= LAST_ROW; r++) {
  html += `<tr><th class="${r <= SEL_ROW ? 'in' : ''}">${r}</th>`;
  for (let c = 0; c < COLS; c++) {
    let cls = '';
    if (c < SEL_COLS && r <= SEL_ROW) cls = 'in';
    if (plain.includes(colName(c) + r)) cls = 'plain';
    html += `<td class="${cls}"></td>`;
  }
  html += '</tr>';
}

document.getElementById('cells').innerHTML = html + '</tbody>';
```
